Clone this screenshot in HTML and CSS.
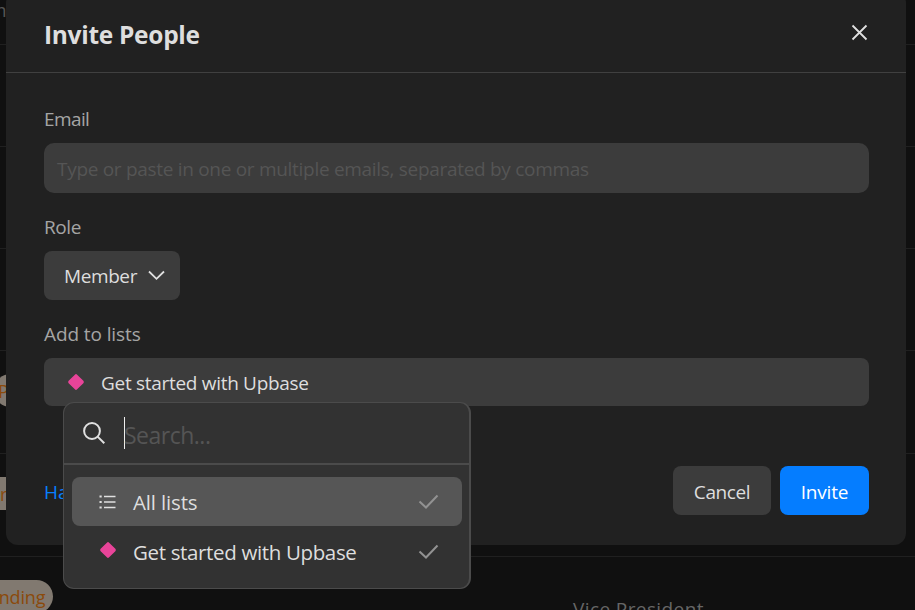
FILE: index.html
```html
<!DOCTYPE html>
<html lang="en">
<head>
<meta charset="utf-8">
<title>Invite People</title>
<link rel="stylesheet" href="styles.css">
</head>
<body>
<div class="page">
  <div class="row row-first"><span class="cell-name">m</span></div>
  <div class="row"></div>
  <div class="row"></div>
  <div class="row"></div>
  <div class="row row-tall"><span class="pill pill-start">P</span></div>
  <div class="row row-tall"><span class="pill pill-clipped">r</span></div>
  <div class="row row-tall"><span class="pill">Pending</span><span class="cell-title">Vice President</span></div>
</div>

<section class="modal">
  <header class="modal-header">
    <h1 class="title">Invite People</h1>
    <svg class="close" viewBox="0 0 18 18"><path d="M1.500 1.500L15.500 15.500M15.500 1.500L1.500 15.500"/></svg>
  </header>
  <div class="modal-body">
    <label class="label label-email">Email</label>
    <div class="input"><span class="placeholder">Type or paste in one or multiple emails, separated by commas</span></div>
    <label class="label label-role">Role</label>
    <button class="button role"><span class="t-member">Member</span><svg class="chevron" viewBox="0 0 18 12"><path d="M2 1.500L9.500 8.800L17 1.500"/></svg></button>
    <label class="label label-lists">Add to lists</label>
    <div class="select">
      <svg class="diamond" viewBox="0 0 16 16"><rect x="2" y="2" width="12" height="12" rx="1.600" transform="rotate(45 8 8)"/></svg>
      <span class="t-selected">Get started with Upbase</span>
      <div class="menu">
        <div class="search">
          <svg class="search-icon" viewBox="0 0 24 24"><circle cx="10" cy="10" r="7.900"/><path d="M15.600 15.600L22.300 22.300"/></svg>
          <span class="caret"></span><span class="search-text">Search...</span>
        </div>
        <div class="options">
          <div class="option active">
            <svg class="list-icon" viewBox="0 0 18 16"><path class="dots" d="M0.500 2.500h2.200M0.500 8h2.200M0.500 13.500h2.200"/><path d="M5 2.500H16.500M5 8H16.500M5 13.500H16.500"/></svg>
            <span class="t-all">All lists</span>
            <svg class="check" viewBox="0 0 20 16"><path d="M0.500 7.500L7 13.500L18.500 1.500"/></svg>
          </div>
          <div class="option">
            <svg class="diamond diamond-option" viewBox="0 0 16 16"><rect x="2" y="2" width="12" height="12" rx="1.600" transform="rotate(45 8 8)"/></svg>
            <span class="t-option">Get started with Upbase</span>
            <svg class="check" viewBox="0 0 20 16"><path d="M0.500 7.500L7 13.500L18.500 1.500"/></svg>
          </div>
        </div>
      </div>
    </div>
    <footer class="footer">
      <span class="link">Ha</span>
      <button class="button cancel">Cancel</button>
      <button class="button invite">Invite</button>
    </footer>
  </div>
</section>
</body>
</html>
```
FILE: styles.css
```css
* { box-sizing: border-box; }
body {
  margin: 0;
  width: 915px;
  height: 610px;
  overflow: hidden;
  position: relative;
  background: #101010;
  color: #dedede;
  font-family: "Open Sans", "Noto Sans", sans-serif;
  font-size: 19px;
  line-height: 26px;
}
svg { display: block; flex: none; fill: none; stroke: #e0e0e0; overflow: visible; }
span { white-space: nowrap; }

.page { height: 610px; overflow: hidden; }
.row {
  display: flex;
  height: 102px;
  border-bottom: 1px solid #202020;
}
.row-first { height: 45px; }
.row-tall { height: 103px; }
.cell-name { margin: -3px 0 0 -11px; color: #555; }
.pill {
  flex: none;
  width: 88px;
  height: 33px;
  margin: 23px 0 0 -35px;
  padding-left: 13px;
  border-radius: 17px;
  background: #817970;
  color: #8b4a0b;
  font-size: 18px;
  line-height: 34px;
  letter-spacing: -0.15px;
}
.pill-start { margin-left: -6px; padding-left: 4px; }
.pill-clipped { padding-left: 35px; }
.cell-title { margin: 39px 0 0 520px; color: #666; letter-spacing: 0.4px; }

.modal {
  position: absolute;
  left: 6px;
  top: -9px;
  width: 900px;
  height: 554px;
  border-radius: 12px;
  background: #212121;
}
.modal-header {
  display: flex;
  justify-content: space-between;
  align-items: flex-start;
  height: 82px;
  padding: 27px 37px 0 38px;
  border-bottom: 1px solid #404040;
}
.title { margin: 0; font-size: 24.5px; line-height: 34px; font-weight: 700; letter-spacing: -0.3px; }
.close { width: 18px; height: 18px; margin-top: 6px; stroke-width: 1.8; }
.modal-body { display: flex; flex-direction: column; padding: 0 37px 0 38px; }
.label { display: block; height: 26px; color: #a5a5a5; }
.label-email { margin-top: 33px; letter-spacing: -0.6px; }
.label-role { margin-top: 21px; letter-spacing: -0.4px; }
.label-lists { margin-top: 21px; letter-spacing: -0.1px; }
.input {
  display: flex;
  align-items: center;
  height: 50px;
  margin-top: 11px;
  padding: 2px 13px 0;
  border-radius: 10px;
  background: #3c3c3c;
}
.placeholder { color: #555; letter-spacing: -0.3px; }
.button {
  display: flex;
  align-items: center;
  height: 49px;
  padding: 2px 20px 0;
  border: 0;
  border-radius: 8px;
  background: #3c3c3c;
  color: #dedede;
  font: inherit;
}
.role { width: 136px; margin-top: 11px; justify-content: space-between; padding-top: 0; padding-right: 15px; }
.t-member { letter-spacing: -0.4px; }
.chevron { width: 18px; height: 12px; stroke-width: 1.8; }
.select {
  position: relative;
  display: flex;
  align-items: center;
  height: 48px;
  margin-top: 11px;
  padding: 2px 24px 0;
  border-radius: 8px;
  background: #3c3c3c;
}
.diamond { width: 16px; height: 16px; margin-top: -3px; fill: #e84499; stroke: none; }
.t-selected { margin-left: 17px; letter-spacing: -0.3px; }

.menu {
  position: absolute;
  left: 19px;
  top: 44px;
  width: 408px;
  height: 187px;
  border: 1px solid #4b4b4b;
  border-right-width: 2px;
  border-radius: 11px;
  background: #323232;
}
.search {
  display: flex;
  align-items: center;
  height: 62px;
  padding-left: 18px;
  border-bottom: 2px solid #4b4b4b;
}
.search-icon { width: 24px; height: 24px; stroke-width: 2; }
.caret { width: 1px; height: 32px; margin-left: 18px; background: #eee; }
.search-text { margin-top: 3px; margin-left: -1px; color: #555; font-size: 23px; letter-spacing: -0.5px; }
.options { padding: 12px 7px 0 8px; font-size: 20.5px; }
.option { display: flex; align-items: center; height: 49px; margin-bottom: 1px; padding: 0 23px 0 27px; border-radius: 8px; }
.active { background: #565656; }
.list-icon { width: 18px; height: 16px; margin-top: 1px; stroke-width: 1.6; }
.dots { stroke-width: 2.2; }
.diamond-option { margin-left: 1px; margin-right: 1px; }
.t-all, .t-option { margin: 0 auto 0 16px; letter-spacing: -0.35px; }
.t-all { letter-spacing: -0.15px; }
.check { width: 20px; height: 16px; stroke: #929292; stroke-width: 2; }

.footer { display: flex; align-items: center; margin-top: 60px; }
.link { margin-right: auto; margin-top: 3px; color: #087eff; }
.cancel { width: 98px; justify-content: center; letter-spacing: -0.4px; }
.invite { width: 89px; justify-content: center; margin-left: 9px; background: #057dff; color: #fff; letter-spacing: -0.2px; }
```
